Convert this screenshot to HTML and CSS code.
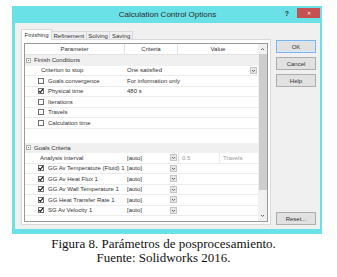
FILE: index.html
```html
<!DOCTYPE html>
<html lang="es">
<head>
    <meta charset="UTF-8">
    <title>Calculation Control Options</title>
    <link rel="stylesheet" href="styles.css">
</head>
<body>
    <div class="shot">
        <div class="window">
            <div class="titlebar">
                <span class="title">Calculation Control Options</span>
                <div class="caption-btns">
                    <span class="help-q">?</span>
                    <span class="close">&#x2715;</span>
                </div>
            </div>
            <div class="client">
                <div class="main">
                    <div class="tabs">
                        <span class="tab active">Finishing</span>
                        <span class="tab">Refinement</span>
                        <span class="tab">Solving</span>
                        <span class="tab">Saving</span>
                    </div>
                    <div class="page">
                        <div class="grid">
                            <div class="rows">
                                <div class="row head">
                                    <span class="cell">Parameter</span>
                                    <span class="cell">Criteria</span>
                                    <span class="cell">Value</span>
                                </div>

                                <!-- Finish Conditions -->
                                <div class="row group">
                                    <span class="expander"></span>Finish Conditions
                                </div>
                                <div class="row">
                                    <span class="cell param plain">Criterion to stop</span>
                                    <span class="cell combo wide">One satisfied<span class="drop"><svg viewBox="0 0 7 7"><path d="M2 3l1.5 1.5L5 3" /></svg></span></span>
                                </div>
                                <div class="row">
                                    <span class="cell param"><span class="check"></span>Goals convergence</span>
                                    <span class="cell crit info">For information only</span>
                                    <span class="cell"></span>
                                </div>
                                <div class="row">
                                    <span class="cell param"><span class="check on"><svg viewBox="0 0 6 6"><path d="M1 3l1.3 1.4L5 1.2" /></svg></span>Physical time</span>
                                    <span class="cell crit">480 s</span>
                                    <span class="cell"></span>
                                </div>
                                <div class="row">
                                    <span class="cell param"><span class="check"></span>Iterations</span>
                                    <span class="cell crit"></span>
                                    <span class="cell"></span>
                                </div>
                                <div class="row">
                                    <span class="cell param"><span class="check"></span>Travels</span>
                                    <span class="cell crit"></span>
                                    <span class="cell"></span>
                                </div>
                                <div class="row">
                                    <span class="cell param"><span class="check"></span>Calculation time</span>
                                    <span class="cell crit"></span>
                                    <span class="cell"></span>
                                </div>
                                <div class="spacer"></div>

                                <!-- Goals Criteria -->
                                <div class="row group">
                                    <span class="expander"></span>Goals Criteria
                                </div>
                                <div class="row">
                                    <span class="cell param plain2">Analysis interval</span>
                                    <span class="cell crit combo">[auto]<span class="drop"><svg viewBox="0 0 7 7"><path d="M2 3l1.5 1.5L5 3" /></svg></span></span>
                                    <span class="cell value"><span class="val-num">0.5</span><span class="val-unit">Travels</span></span>
                                </div>
                                <div class="row">
                                    <span class="cell param"><span class="check on"><svg viewBox="0 0 6 6"><path d="M1 3l1.3 1.4L5 1.2" /></svg></span>GG Av Temperature (Fluid) 1</span>
                                    <span class="cell crit combo">[auto]<span class="drop"><svg viewBox="0 0 7 7"><path d="M2 3l1.5 1.5L5 3" /></svg></span></span>
                                    <span class="cell"></span>
                                </div>
                                <div class="row">
                                    <span class="cell param"><span class="check on"><svg viewBox="0 0 6 6"><path d="M1 3l1.3 1.4L5 1.2" /></svg></span>GG Av Heat Flux 1</span>
                                    <span class="cell crit combo">[auto]<span class="drop"><svg viewBox="0 0 7 7"><path d="M2 3l1.5 1.5L5 3" /></svg></span></span>
                                    <span class="cell"></span>
                                </div>
                                <div class="row">
                                    <span class="cell param"><span class="check on"><svg viewBox="0 0 6 6"><path d="M1 3l1.3 1.4L5 1.2" /></svg></span>GG Av Wall Temperature 1</span>
                                    <span class="cell crit combo">[auto]<span class="drop"><svg viewBox="0 0 7 7"><path d="M2 3l1.5 1.5L5 3" /></svg></span></span>
                                    <span class="cell"></span>
                                </div>
                                <div class="row">
                                    <span class="cell param"><span class="check on"><svg viewBox="0 0 6 6"><path d="M1 3l1.3 1.4L5 1.2" /></svg></span>GG Heat Transfer Rate 1</span>
                                    <span class="cell crit combo">[auto]<span class="drop"><svg viewBox="0 0 7 7"><path d="M2 3l1.5 1.5L5 3" /></svg></span></span>
                                    <span class="cell"></span>
                                </div>
                                <div class="row">
                                    <span class="cell param"><span class="check on"><svg viewBox="0 0 6 6"><path d="M1 3l1.3 1.4L5 1.2" /></svg></span>SG Av Velocity 1</span>
                                    <span class="cell crit combo">[auto]<span class="drop"><svg viewBox="0 0 7 7"><path d="M2 3l1.5 1.5L5 3" /></svg></span></span>
                                    <span class="cell"></span>
                                </div>
                            </div>
                            <div class="scrollbar">
                                <span class="arrow"><svg viewBox="0 0 9 10"><path d="M3 6l1.5-1.5L6 6" /></svg></span>
                                <span class="thumb"></span>
                                <span class="track"></span>
                                <span class="arrow"><svg viewBox="0 0 9 10"><path d="M3 4l1.5 1.5L6 4" /></svg></span>
                            </div>
                        </div>
                    </div>
                </div>
                <div class="buttons">
                    <button class="button default">OK</button>
                    <button class="button">Cancel</button>
                    <button class="button">Help</button>
                    <button class="button reset">Reset...</button>
                </div>
            </div>
        </div>
        <div class="caption">
            Figura 8. Parámetros de posprocesamiento.<br>
            Fuente: Solidworks 2016.
        </div>
    </div>
</body>
</html>
```

FILE: styles.css
```css
body {
    margin: 0;
    background-color: #fff;
    font-family: "Liberation Sans", Arial, sans-serif;
    color: #333;
}
.shot {
    width: 337px;
    padding-top: 6px;
}
.window {
    margin-left: 12px;
    width: 310px;
    background-color: #6ae1e7;
    padding: 0 2px 5px 3px;
    box-sizing: border-box;
}
.titlebar {
    height: 17px;
    display: grid;
    grid-template-columns: 1fr auto 1fr;
    align-items: center;
}
.title {
    grid-column: 2;
    font-size: 8px;
    color: #2b2b2b;
}
.caption-btns {
    grid-column: 3;
    justify-self: end;
    align-self: start;
    display: flex;
    align-items: center;
    margin-top: 2px;
}
.help-q {
    font-size: 7px;
    font-weight: bold;
    color: #333;
    margin-right: 8px;
}
.close {
    width: 23px;
    height: 10px;
    background-color: #c75050;
    color: #fff;
    font-size: 5px;
    display: flex;
    align-items: center;
    justify-content: center;
}
.client {
    height: 206px;
    background-color: #f0f0f0;
    display: flex;
    gap: 5px;
    padding: 6px 4px 4px 6px;
    box-sizing: border-box;
}
.main {
    width: 250px;
    display: flex;
    flex-direction: column;
}
.tabs {
    display: flex;
    align-items: flex-end;
    height: 10px;
    position: relative;
    z-index: 1;
}
.tab {
    height: 8px;
    line-height: 8px;
    font-size: 6px;
    padding: 0 1.5px;
    border: 1px solid #d9d9d9;
    border-bottom: none;
    margin-left: -1px;
    background-color: #f0f0f0;
    box-sizing: border-box;
}
.tab.active {
    height: 11px;
    line-height: 10px;
    margin-left: 0;
    padding: 0 2.5px;
    background-color: #fff;
    margin-bottom: -1px;
}
.page {
    flex: 1;
    border: 1px solid #d9d9d9;
    background-color: #fff;
    padding: 3px 2px 2px 2px;
    display: flex;
}
.grid {
    flex: 1;
    border: 1px solid #9a9a9a;
    display: flex;
    overflow: hidden;
}
.rows {
    width: 233px;
}
.row {
    display: grid;
    grid-template-columns: 100px 53px 80px;
    height: 10.5px;
    font-size: 6px;
    border-bottom: 1px solid #ececec;
    box-sizing: border-box;
    align-items: center;
}
.cell {
    height: 100%;
    display: flex;
    align-items: center;
    white-space: nowrap;
    overflow: hidden;
}
.cell.info {
    overflow: visible;
}
.row.head {
    height: 11px;
    border-bottom: 1px solid #e3e3e3;
}
.row.head .cell {
    justify-content: center;
    border-right: 1px solid #e3e3e3;
}
.row.head .cell:last-child {
    border-right: none;
}
.row.group {
    display: flex;
    background-color: #f0f0f0;
    border-bottom: none;
    padding-left: 1px;
}
.expander {
    width: 5px;
    height: 5px;
    border: 1px solid #b0b0b0;
    box-sizing: border-box;
    margin-right: 3px;
    position: relative;
    background-color: #fff;
}
.expander::after {
    content: "";
    position: absolute;
    left: 1px;
    top: 1px;
    width: 1px;
    height: 1px;
    border-top: 1px solid #777;
}
.param {
    padding-left: 13px;
}
.param.plain {
    padding-left: 16px;
}
.param.plain2 {
    padding-left: 15px;
}
.check {
    width: 6px;
    height: 6px;
    border: 1px solid #707070;
    background-color: #fff;
    box-sizing: border-box;
    margin-right: 4px;
    flex-shrink: 0;
    display: flex;
}
.check svg {
    width: 6px;
    height: 6px;
    margin: -1px;
}
.check path {
    fill: none;
    stroke: #111;
    stroke-width: 1.1;
}
.crit {
    padding-left: 2px;
}
.combo {
    padding-left: 2px;
    justify-content: space-between;
}
.combo.wide {
    grid-column: 2 / 4;
}
.drop {
    width: 7px;
    height: 7px;
    background-color: #e6e6e6;
    border: 1px solid #c4c4c4;
    box-sizing: border-box;
    margin-right: 1px;
    display: flex;
}
.drop svg {
    width: 7px;
    height: 7px;
    margin: -1px;
}
.drop path,
.arrow path {
    fill: none;
    stroke: #555;
    stroke-width: 0.9;
}
.value {
    color: #999;
    border-left: 1px solid #e3e3e3;
}
.val-num {
    width: 41px;
    padding-left: 3px;
    box-sizing: border-box;
    border-right: 1px solid #ececec;
    height: 100%;
    display: flex;
    align-items: center;
}
.val-unit {
    padding-left: 3px;
}
.spacer {
    height: 14px;
}
.scrollbar {
    width: 9px;
    background-color: #f0f0f0;
    display: flex;
    flex-direction: column;
    align-items: center;
}
.arrow {
    height: 10px;
    width: 9px;
    display: flex;
}
.arrow svg {
    width: 9px;
    height: 10px;
}
.thumb {
    width: 8px;
    height: 136px;
    background-color: #cdcdcd;
}
.track {
    flex: 1;
}
.buttons {
    width: 40px;
    display: flex;
    flex-direction: column;
    gap: 4px;
    padding-top: 11px;
}
.button {
    height: 13px;
    width: 40px;
    padding: 0;
    font-family: "Liberation Sans", Arial, sans-serif;
    font-size: 6px;
    color: #333;
    background-color: #e1e1e1;
    border: 1px solid #adadad;
}
.button.default {
    border-color: #7eb4ea;
    box-shadow: inset 0 0 0 1px #d6e8f9;
}
.button.reset {
    margin-top: auto;
}
.caption {
    padding-right: 10px;
    margin-top: 3px;
    font-family: "Liberation Serif", "Times New Roman", serif;
    font-size: 13px;
    line-height: 14px;
    color: #111;
    text-align: center;
}
```
